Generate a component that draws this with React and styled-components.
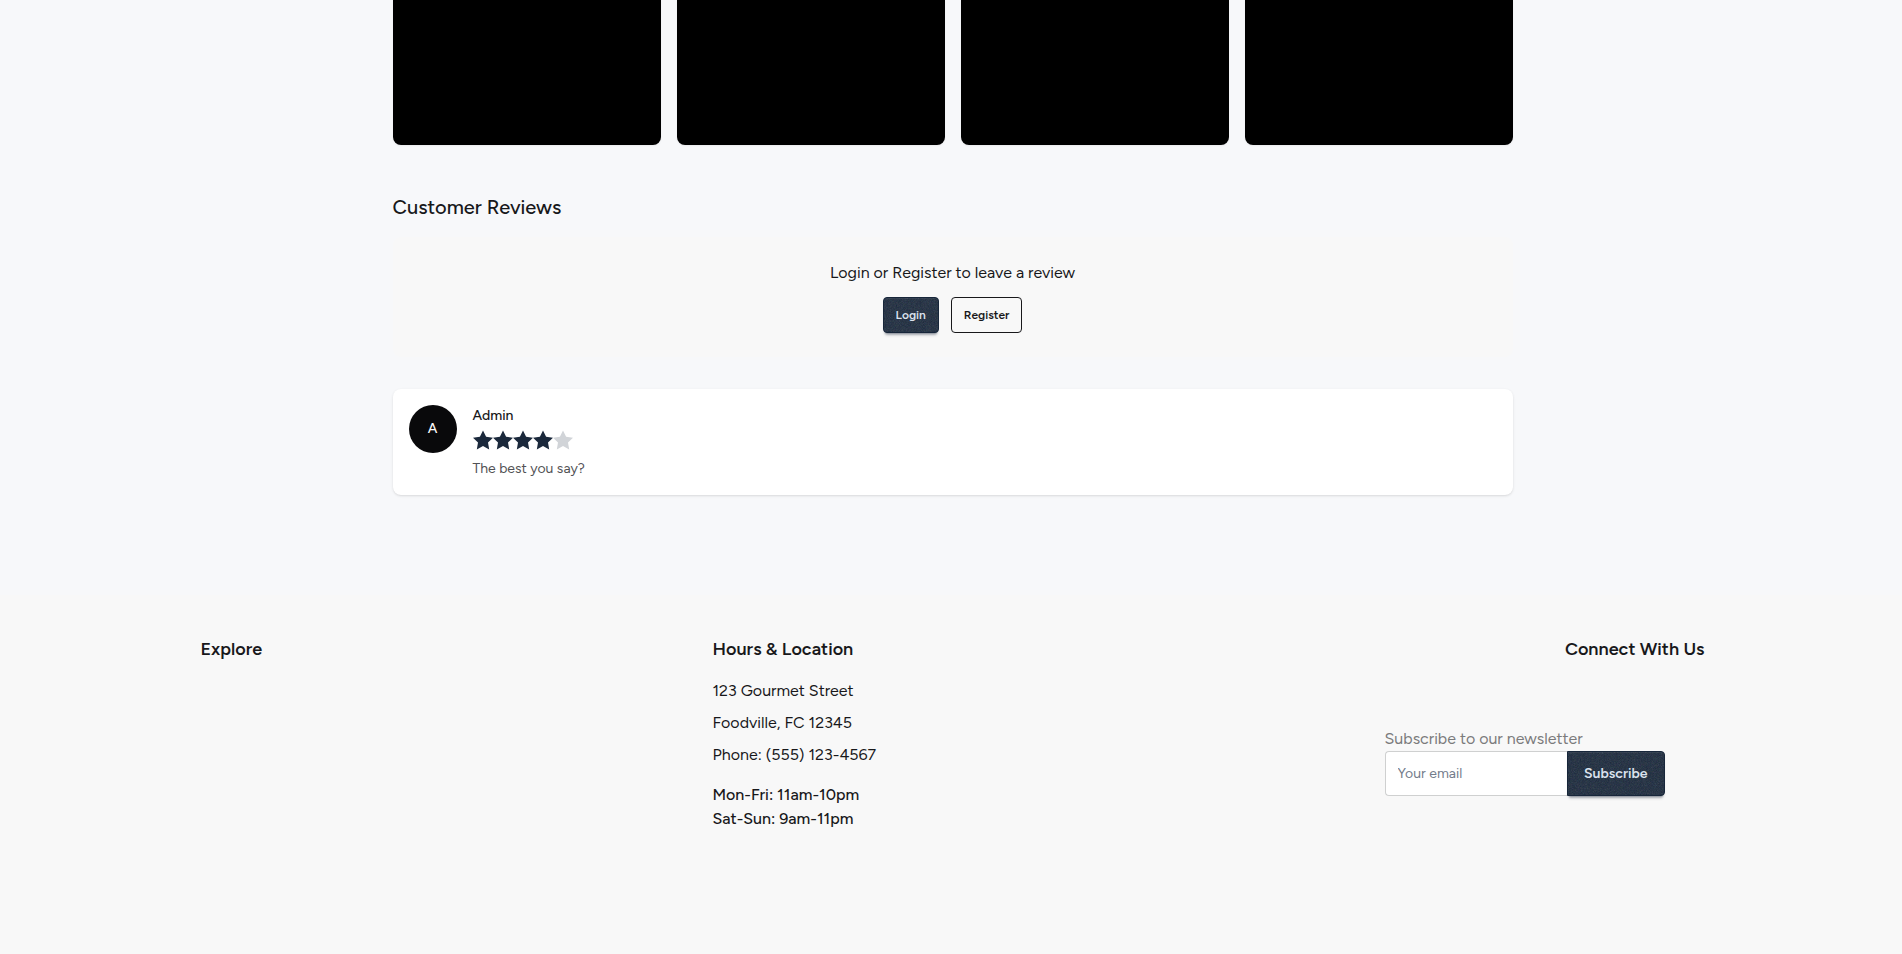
import React from "react";
import styled, { createGlobalStyle } from "styled-components";

const Global = createGlobalStyle`
  *, *::before, *::after { box-sizing: border-box; }
  body {
    margin: 0;
    background: #f7f8fa;
    color: #18181b;
    font: 400 16px/24px Figtree, Lato, sans-serif;
  }
  h2, h3, p { margin: 0; }
  button, input { font-family: inherit; }
`;

const noise = `url("data:image/svg+xml,%3Csvg xmlns='http://www.w3.org/2000/svg'%3E%3Cfilter id='a'%3E%3CfeTurbulence type='fractalNoise' baseFrequency='1.34' numOctaves='4' stitchTiles='stitch'/%3E%3C/filter%3E%3Crect width='200' height='200' filter='url(%23a)' opacity='0.2'/%3E%3C/svg%3E")`;

const Page = styled.div`
  padding-left: 3px;
`;

const Main = styled.main`
  max-width: 1152px;
  margin: 0 auto;
  padding: 0 16px 100px;
`;

const Gallery = styled.div`
  display: grid;
  grid-template-columns: repeat(4, 1fr);
  gap: 16px;
  margin-bottom: 48px;
`;

const Tile = styled.div`
  height: 145px;
  background: #000;
  border-radius: 0 0 8px 8px;
  box-shadow: 0 1px 2px rgba(0, 0, 0, 0.06);
`;

const SectionTitle = styled.h2`
  font-size: 20px;
  line-height: 28px;
  font-weight: 500;
  margin-bottom: 16px;
`;

const LoginPanel = styled.section`
  display: flex;
  flex-direction: column;
  align-items: center;
  gap: 12px;
  padding: 24px;
  margin-bottom: 32px;
  border-radius: 8px;
  background: #f8f8f8;
`;

const Actions = styled.div`
  display: flex;
  gap: 12px;
`;

const Button = styled.button`
  height: ${(p) => (p.$large ? 45 : 36)}px;
  padding: 0 ${(p) => (p.$large ? 16 : 12)}px;
  font-size: ${(p) => (p.$large ? 14 : 12)}px;
  font-weight: 600;
  border-radius: ${(p) => (p.$joined ? "0 4px 4px 0" : "4px")};
  border: 1px solid ${(p) => (p.$outline ? "#18181b" : "#17263a")};
  color: ${(p) => (p.$outline ? "#18181b" : "#dce3ee")};
  background: ${(p) => (p.$outline ? "transparent" : `${noise}, #1a283b`)};
  box-shadow: ${(p) =>
    p.$outline
      ? "none"
      : "inset 0 1px 0 rgba(255, 255, 255, 0.06), 0 3px 2px -2px rgba(30, 41, 59, 0.3), 0 4px 3px -2px rgba(30, 41, 59, 0.3)"};
`;

const ReviewCard = styled.article`
  display: flex;
  gap: 16px;
  padding: 16px;
  background: #fff;
  border-radius: 8px;
  box-shadow: 0 1px 3px rgba(0, 0, 0, 0.1), 0 1px 2px -1px rgba(0, 0, 0, 0.1);
`;

const Avatar = styled.div`
  width: 48px;
  height: 48px;
  display: grid;
  place-items: center;
  border-radius: 50%;
  background: #09090b;
  color: #f8f8f8;
  font-size: 14px;
  font-weight: 500;
`;

const ReviewBody = styled.div`
  font-size: 14px;
  line-height: 20px;
`;

const Author = styled.p`
  line-height: 22px;
  font-weight: 500;
`;

const Stars = styled.div`
  display: flex;
  margin: 3px 0 9px;
`;

const Star = styled.svg`
  width: 20px;
  height: 20px;
  fill: ${(p) => (p.$on ? "#1a283b" : "#d1d4d8")};
`;

const Comment = styled.p`
  color: #525255;
`;

const Footer = styled.footer`
  min-height: 400px;
  margin-left: -3px;
  padding: 40px 16px 40px 19px;
  background: #f8f8f8;
`;

const FooterGrid = styled.div`
  max-width: 1504px;
  margin: 0 auto;
  display: grid;
  grid-template-columns: repeat(3, 1fr);
  gap: 32px;
`;

const FooterTitle = styled.h3`
  font-size: 18px;
  line-height: 28px;
  font-weight: 600;
`;

const Address = styled.address`
  display: flex;
  flex-direction: column;
  gap: 8px;
  margin: 16px 0;
  font-style: normal;
`;

const Hours = styled.p`
  font-weight: 500;
`;

const Connect = styled.div`
  display: flex;
  flex-direction: column;
  align-items: flex-end;
  gap: 64px;
`;

const Newsletter = styled.form`
  width: 320px;
`;

const Label = styled.label`
  display: block;
  color: #7b7b7c;
`;

const Join = styled.div`
  display: flex;
  width: 280px;
`;

const Email = styled.input`
  flex: 1;
  min-width: 0;
  height: 45px;
  padding: 0 12px;
  font-size: 14px;
  color: #18181b;
  background: #fff;
  border: 1px solid #cfd0d0;
  border-right: 0;
  border-radius: 4px 0 0 4px;
  &::placeholder { color: #737c8b; opacity: 1; }
`;

export default function App() {
  return (
    <Page>
      <Global />
      <Main>
        <Gallery>
          {[1, 2, 3, 4].map((n) => <Tile key={n} />)}
        </Gallery>
        <SectionTitle>Customer Reviews</SectionTitle>
        <LoginPanel>
          <p>Login or Register to leave a review</p>
          <Actions>
            <Button type="button">Login</Button>
            <Button type="button" $outline>Register</Button>
          </Actions>
        </LoginPanel>
        <ReviewCard>
          <Avatar>A</Avatar>
          <ReviewBody>
            <Author>Admin</Author>
            <Stars role="img" aria-label="4 out of 5 stars">
              {[1, 2, 3, 4, 5].map((n) => (
                <Star key={n} viewBox="0 0 20 20" $on={n <= 4}>
                  <path d="M10 0.5 13.1 6.7 20 7.7 15 12.5 16.2 19.4 10 16.1 3.8 19.4 5 12.5 0 7.7 6.9 6.7Z" />
                </Star>
              ))}
            </Stars>
            <Comment>The best you say?</Comment>
          </ReviewBody>
        </ReviewCard>
      </Main>
      <Footer>
        <FooterGrid>
          <FooterTitle>Explore</FooterTitle>
          <div>
            <FooterTitle>Hours &amp; Location</FooterTitle>
            <Address>
              <span>123 Gourmet Street</span>
              <span>Foodville, FC 12345</span>
              <span>Phone: (555) 123-4567</span>
            </Address>
            <Hours>Mon-Fri: 11am-10pm</Hours>
            <Hours>Sat-Sun: 9am-11pm</Hours>
          </div>
          <Connect>
            <FooterTitle>Connect With Us</FooterTitle>
            <Newsletter>
              <Label htmlFor="email">Subscribe to our newsletter</Label>
              <Join>
                <Email id="email" type="email" placeholder="Your email" />
                <Button type="button" $large $joined>Subscribe</Button>
              </Join>
            </Newsletter>
          </Connect>
        </FooterGrid>
      </Footer>
    </Page>
  );
}
